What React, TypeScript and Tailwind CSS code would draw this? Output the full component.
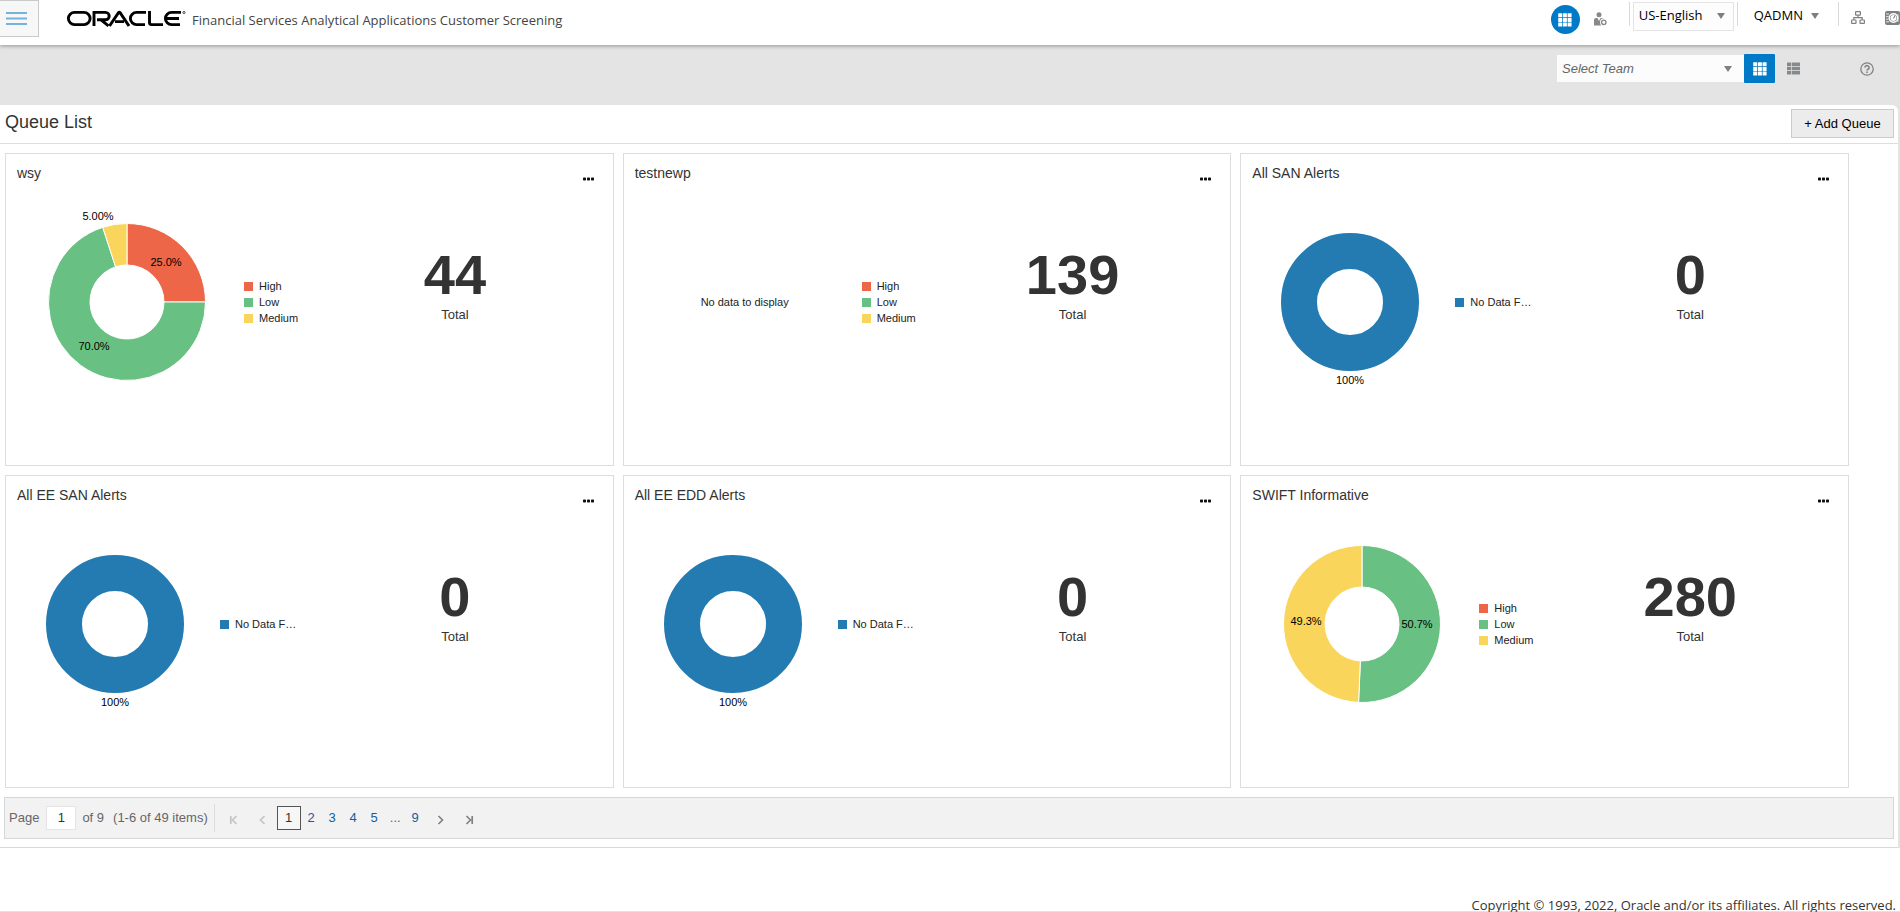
import React from "react";

const COLORS = { High: "#ed6647", Low: "#68c182", Medium: "#fad55c", None: "#237bb1" };

type Slice = { value: number; color: string };
type Label = { x: number; y: number; text: string };
type Chart = { width: number; radius: number; inner: number; slices: Slice[]; labels: Label[] };
type LegendItem = { name: string; color: string };
type Queue = { title: string; total: number; chart: Chart | null; legend: LegendItem[] };

const priorityLegend: LegendItem[] = [
  { name: "High", color: COLORS.High },
  { name: "Low", color: COLORS.Low },
  { name: "Medium", color: COLORS.Medium },
];

const emptyLegend: LegendItem[] = [{ name: "No Data F…", color: COLORS.None }];

const emptyChart: Chart = {
  width: 136,
  radius: 69,
  inner: 33,
  slices: [{ value: 100, color: COLORS.None }],
  labels: [{ x: 0, y: 82, text: "100%" }],
};

const queues: Queue[] = [
  {
    title: "wsy",
    total: 44,
    legend: priorityLegend,
    chart: {
      width: 160,
      radius: 78,
      inner: 37,
      slices: [
        { value: 25, color: COLORS.High },
        { value: 70, color: COLORS.Low },
        { value: 5, color: COLORS.Medium },
      ],
      labels: [
        { x: 39, y: -36, text: "25.0%" },
        { x: -33, y: 48, text: "70.0%" },
        { x: -29, y: -82, text: "5.00%" },
      ],
    },
  },
  { title: "testnewp", total: 139, legend: priorityLegend, chart: null },
  { title: "All SAN Alerts", total: 0, legend: emptyLegend, chart: emptyChart },
  { title: "All EE SAN Alerts", total: 0, legend: emptyLegend, chart: emptyChart },
  { title: "All EE EDD Alerts", total: 0, legend: emptyLegend, chart: emptyChart },
  {
    title: "SWIFT Informative",
    total: 280,
    legend: priorityLegend,
    chart: {
      width: 160,
      radius: 78,
      inner: 37,
      slices: [
        { value: 50.7, color: COLORS.Low },
        { value: 49.3, color: COLORS.Medium },
      ],
      labels: [
        { x: 55, y: 4, text: "50.7%" },
        { x: -56, y: 1, text: "49.3%" },
      ],
    },
  },
];

function arcPath(start: number, end: number, r: number, inner: number) {
  const point = (fraction: number, radius: number) => {
    const angle = fraction * 2 * Math.PI - Math.PI / 2;
    return `${radius * Math.cos(angle)} ${radius * Math.sin(angle)}`;
  };
  const large = end - start > 0.5 ? 1 : 0;
  return `M${point(start, r)} A${r} ${r} 0 ${large} 1 ${point(end, r)} L${point(end, inner)} A${inner} ${inner} 0 ${large} 0 ${point(start, inner)} Z`;
}

function Donut({ chart, title }: { chart: Chart; title: string }) {
  const { width, radius: r, inner, slices, labels } = chart;
  let sum = 0;
  return (
    <svg
      role="img"
      aria-label={title}
      width={width}
      height={r * 2}
      viewBox={`${-width / 2} ${-r} ${width} ${r * 2}`}
      className="shrink-0 overflow-visible"
    >
      {slices.length === 1 ? (
        <circle r={(r + inner) / 2} fill="none" stroke={slices[0].color} strokeWidth={r - inner} />
      ) : (
        slices.map((s) => {
          const start = sum / 100;
          sum += s.value;
          return (
            <path key={s.color} d={arcPath(start, sum / 100, r + 0.5, inner)} fill={s.color} stroke="#fff" strokeWidth="1" />
          );
        })
      )}
      {labels.map((l) => (
        <text key={l.text} x={l.x} y={l.y} textAnchor="middle" fill="#000" className="text-[11px]">
          {l.text}
        </text>
      ))}
    </svg>
  );
}

function QueueCard({ queue }: { queue: Queue }) {
  return (
    <article className="h-[313px] border border-[#dcdddf] bg-white">
      <header className="flex h-12 items-start justify-between pt-[9px] pr-[19px] pl-[11px]">
        <h2 className="text-sm text-[#333]">{queue.title}</h2>
        <button type="button" aria-label={`Actions for ${queue.title}`} className="mt-[14px] flex h-1">
          <svg width="11" height="4" viewBox="0 0 11 4" fill="#111">
            <rect x="0" y="0.5" width="3" height="3" rx="0.7" />
            <rect x="4" y="0.5" width="3" height="3" rx="0.7" />
            <rect x="8" y="0.5" width="3" height="3" rx="0.7" />
          </svg>
        </button>
      </header>
      <div className="grid h-[200px] grid-cols-[48%_52%]">
        <div className="flex items-center gap-[37px] pl-[41px]">
          {queue.chart ? (
            <Donut chart={queue.chart} title={queue.title} />
          ) : (
            <p className="w-[160px] shrink-0 text-center text-[11px] text-[#222]">No data to display</p>
          )}
          <ul className="shrink-0 text-[11px] leading-4 text-[#222]">
            {queue.legend.map((item) => (
              <li key={item.name} className="flex items-center gap-[6px]">
                <span className="size-[9px]" style={{ backgroundColor: item.color }} />
                {item.name}
              </li>
            ))}
          </ul>
        </div>
        <div className="flex flex-col items-center justify-center pb-8 text-[#333]">
          <strong className="text-[56px] leading-[56px] font-bold">{queue.total}</strong>
          <span className="mt-0.5 text-[13px] leading-5">Total</span>
        </div>
      </div>
    </article>
  );
}

function GridIcon() {
  return (
    <svg width="14" height="14" viewBox="0 0 14 14" fill="#fff">
      {[0.2, 4.9, 9.6].map((y) =>
        [0.2, 4.9, 9.6].map((x) => <rect key={`${x}-${y}`} x={x} y={y} width="4" height="4" rx="0.3" />)
      )}
    </svg>
  );
}

function Caret() {
  return (
    <svg width="8" height="6" viewBox="0 0 8 6" fill="#7d8083" className="shrink-0">
      <path d="M0 0h8L4 6z" />
    </svg>
  );
}

function OracleLogo() {
  return (
    <svg width="120" height="17" viewBox="0 0 120 17" fill="none" stroke="#000" strokeWidth="2.9" role="img" aria-label="Oracle">
      <path d="M8.5 2.4h9.5a6.1 6.1 0 0 1 0 12.2H8.5a6.1 6.1 0 0 1 0-12.2z" />
      <path d="M28 16V2.4h11.5a3.7 3.7 0 0 1 0 7.4H31M35 9.8l7.5 6" />
      <path d="M43.5 16l9-13.4q.8-1 1.6 0L63 16M49 11.6h9" />
      <path d="M80 2.4h-9.5a6.1 6.1 0 0 0 0 12.2H79" />
      <path d="M83.5 1v11.5q0 2.1 2.1 2.1H97" />
      <path d="M115 2.4h-9.5a6.1 6.1 0 0 0 0 12.2H114M100.5 8.500H113" />
      <circle cx="118" cy="2.5" r="1.1" strokeWidth="0.7" />
    </svg>
  );
}

function PageArrow({ label, path, disabled }: { label: string; path: string; disabled?: boolean }) {
  return (
    <button type="button" aria-label={label} disabled={disabled} className="flex w-[9px] justify-center pt-1">
      <svg width="9" height="10" viewBox="0 0 9 10" fill="none" strokeWidth="1.7" stroke={disabled ? "#c2c4c6" : "#808386"}>
        <path d={path} />
      </svg>
    </button>
  );
}

export default function App() {
  return (
    <div className="flex min-h-screen flex-col bg-white font-['Liberation_Sans',Arial,sans-serif] text-[13px] text-[#333]">
      <header className="relative z-10 flex h-[45px] items-start bg-white shadow-[0_1px_4px_rgba(0,0,0,0.35)]">
        <button type="button" aria-label="Menu" className="flex h-[37px] w-[39px] items-center border border-l-0 border-[#c8cacc] bg-[#f7f7f7] pl-1.5">
          <svg width="21" height="13" viewBox="0 0 21 13" fill="#74b3da">
            <path d="M0 0h21v2H0zM0 5.500h21v2H0zM0 11h21v2H0z" />
          </svg>
        </button>
        <div className="flex items-start gap-1.5 pt-2.5 pl-[27px]">
          <OracleLogo />
          <h1 className="font-['Open_Sans',sans-serif] text-[13px] leading-5 text-[#444]">
            Financial Services Analytical Applications Customer Screening
          </h1>
        </div>
        <nav className="ml-auto flex shrink-0 items-start font-['Open_Sans',sans-serif] text-[13px] text-black">
          <button type="button" aria-label="Applications" className="mt-[5px] flex size-[29px] items-center justify-center rounded-full bg-[#0079c6]">
            <GridIcon />
          </button>
          <button type="button" aria-label="User administration" className="mt-3 ml-3.5">
            <svg width="13" height="14" viewBox="0 0 13 14" fill="#868a8d">
              <circle cx="5" cy="2.8" r="2.5" />
              <path d="M0 13.500V8Q0 6 2 6h1.500l1.500 3 1.500-3H8q.8 0 1.300.5A3.700 3.700 0 0 0 6 10.200q0 1.900 1.200 3.300z" />
              <circle cx="9.8" cy="10.3" r="2.2" fill="none" stroke="#868a8d" strokeWidth="1.4" />
            </svg>
          </button>
          <span className="mt-0.5 ml-[22px] h-6 w-px bg-[#d9d9d9]" />
          <button type="button" className="mt-0.5 ml-[3px] flex h-[29px] w-[101px] items-center justify-between border border-[#e4e4e4] bg-[#fdfdfd] pr-2 pb-0.5 pl-[5px]">
            US-English <Caret />
          </button>
          <span className="mt-0.5 ml-[3px] h-6 w-px bg-[#d9d9d9]" />
          <button type="button" className="mt-0.5 ml-4 flex h-[29px] items-center gap-2 pb-0.5">
            QADMN <Caret />
          </button>
          <span className="mt-0.5 ml-[19px] h-6 w-px bg-[#d9d9d9]" />
          <button type="button" aria-label="Hierarchy" className="mt-[11px] ml-3">
            <svg width="14" height="13" viewBox="0 0 14 13" fill="none" stroke="#7d8083" strokeWidth="1.2">
              <rect x="4.6" y="0.6" width="4.8" height="3.6" rx="0.5" />
              <rect x="0.6" y="9" width="4.4" height="3.4" rx="0.5" />
              <rect x="9" y="9" width="4.4" height="3.4" rx="0.5" />
              <path d="M7 4.200v2.300M2.800 9V6.600h8.400V9" />
            </svg>
          </button>
          <button type="button" aria-label="Scheduler" className="mt-[11px] ml-5">
            <svg width="15" height="14" viewBox="0 0 15 14" fill="#7d8083">
              <rect x="0" y="0" width="15" height="14" rx="2" />
              <path d="M1 3h3M1 5.600h2.500M1 8.200h2.500M1 10.800h3" stroke="#fff" strokeWidth="0.8" />
              <circle cx="8.500" cy="7" r="4.300" fill="none" stroke="#fff" strokeWidth="1.4" />
              <circle cx="8.500" cy="7" r="3" fill="#fff" />
              <path d="M8.500 7.400l1.600-2.800" stroke="#7d8083" strokeWidth="1.1" />
              <path d="M13 3v8" stroke="#fff" strokeWidth="0.7" />
            </svg>
          </button>
        </nav>
      </header>

      <section className="flex h-[60px] items-start justify-end bg-[#e4e4e4] pt-[9px] pr-[26px]">
        <button type="button" className="mt-px flex h-[27px] w-[187px] items-center justify-between bg-[#fcfcfc] pr-3 pl-[5px] text-[13px] text-[#666] italic">
          Select Team <Caret />
        </button>
        <button type="button" aria-label="Card view" className="flex h-[29px] w-[31px] items-center justify-center rounded-[1px] bg-[#0079c6]">
          <GridIcon />
        </button>
        <button type="button" aria-label="List view" className="mt-2 ml-3">
          <svg width="13" height="13" viewBox="0 0 13 13" fill="#868a8d">
            <path d="M0 0.500h4v3.500H0zM4.700 0.500H13v3.500H4.700zM0 4.700h4v3.500H0zM4.700 4.700H13v3.500H4.700zM0 8.900h4v3.500H0zM4.700 8.900H13v3.500H4.700z" />
          </svg>
        </button>
        <button type="button" aria-label="Help" className="mt-2 ml-[60px]">
          <svg width="14" height="14" viewBox="0 0 14 14" fill="none" stroke="#808386" strokeWidth="1.3">
            <circle cx="7" cy="7" r="6.2" />
            <path d="M4.900 5.600a2.100 2 0 1 1 3.200 1.700q-1.100.5-1.100 1.300" strokeWidth="1.6" />
            <path d="M7 9.600v1.500" strokeWidth="1.600" />
          </svg>
        </button>
      </section>

      <div className="bg-[#e4e4e4] pr-0.5">
        <main className="rounded-tr-md border-b border-[#d6d9db] bg-white">
          <div className="flex h-[39px] items-start justify-between border-b border-[#dcdddf] pt-1 pr-1 pl-[5px]">
            <h2 className="text-lg leading-[26px] text-[#333]">Queue List</h2>
            <button type="button" className="h-[29px] w-[103px] border border-[#c9cbcd] bg-[#ececec] text-[13px] leading-6 text-black">
              + Add Queue
            </button>
          </div>
          <div className="grid grid-cols-3 gap-[9px] pt-[9px] pr-[49px] pb-[9px] pl-[5px]">
            {queues.map((q) => (
              <QueueCard key={q.title} queue={q} />
            ))}
          </div>
          <nav aria-label="Pagination" className="mr-1 mb-2 ml-1 flex h-[42px] items-start border border-[#d6d7d9] bg-[#f2f2f2] pt-2 pl-1 text-[13px] leading-6 text-[#666]">
            <label htmlFor="page">Page</label>
            <input id="page" defaultValue="1" className="ml-[7px] h-6 w-[30px] border border-[#e4e4e4] bg-white text-center text-[#333]" />
            <span className="ml-[6px]">of 9</span>
            <span className="ml-[9px]">(1-6 of 49 items)</span>
            <span className="-mt-0.5 ml-[6px] h-7 w-px bg-[#dcdcdc]" />
            <div className="flex items-center text-[#145c9e]">
              <span className="ml-3.5 flex"><PageArrow label="First page" path="M1.800 1v8M7.500 1l-4 4 4 4" disabled /></span>
              <span className="ml-5 flex"><PageArrow label="Previous page" path="M6.500 1l-4 4 4 4" disabled /></span>
              <button type="button" aria-current="page" className="ml-2.5 h-6 w-6 border border-[#555] bg-[#f7f7f7] text-center leading-5 text-[#333]">
                1
              </button>
              {["2", "3", "4", "5"].map((n) => (
                <a key={n} href="#" className="w-[21px] text-center">
                  {n}
                </a>
              ))}
              <span className="w-[21px] text-center text-[#666]">...</span>
              <a href="#" className="w-[19px] text-center">
                9
              </a>
              <span className="ml-[11px] flex"><PageArrow label="Next page" path="M2.500 1l4 4-4 4" /></span>
              <span className="ml-5 flex"><PageArrow label="Last page" path="M7.200 1v8M1.500 1l4 4-4 4" /></span>
            </div>
          </nav>
        </main>
      </div>

      <footer className="mt-auto flex h-5 items-end justify-end border-b border-[#dfe3e6] pr-1 font-['Open_Sans',sans-serif] text-[13px] leading-3 text-[#333]">
        Copyright © 1993, 2022, Oracle and/or its affiliates. All rights reserved.
      </footer>
    </div>
  );
}
